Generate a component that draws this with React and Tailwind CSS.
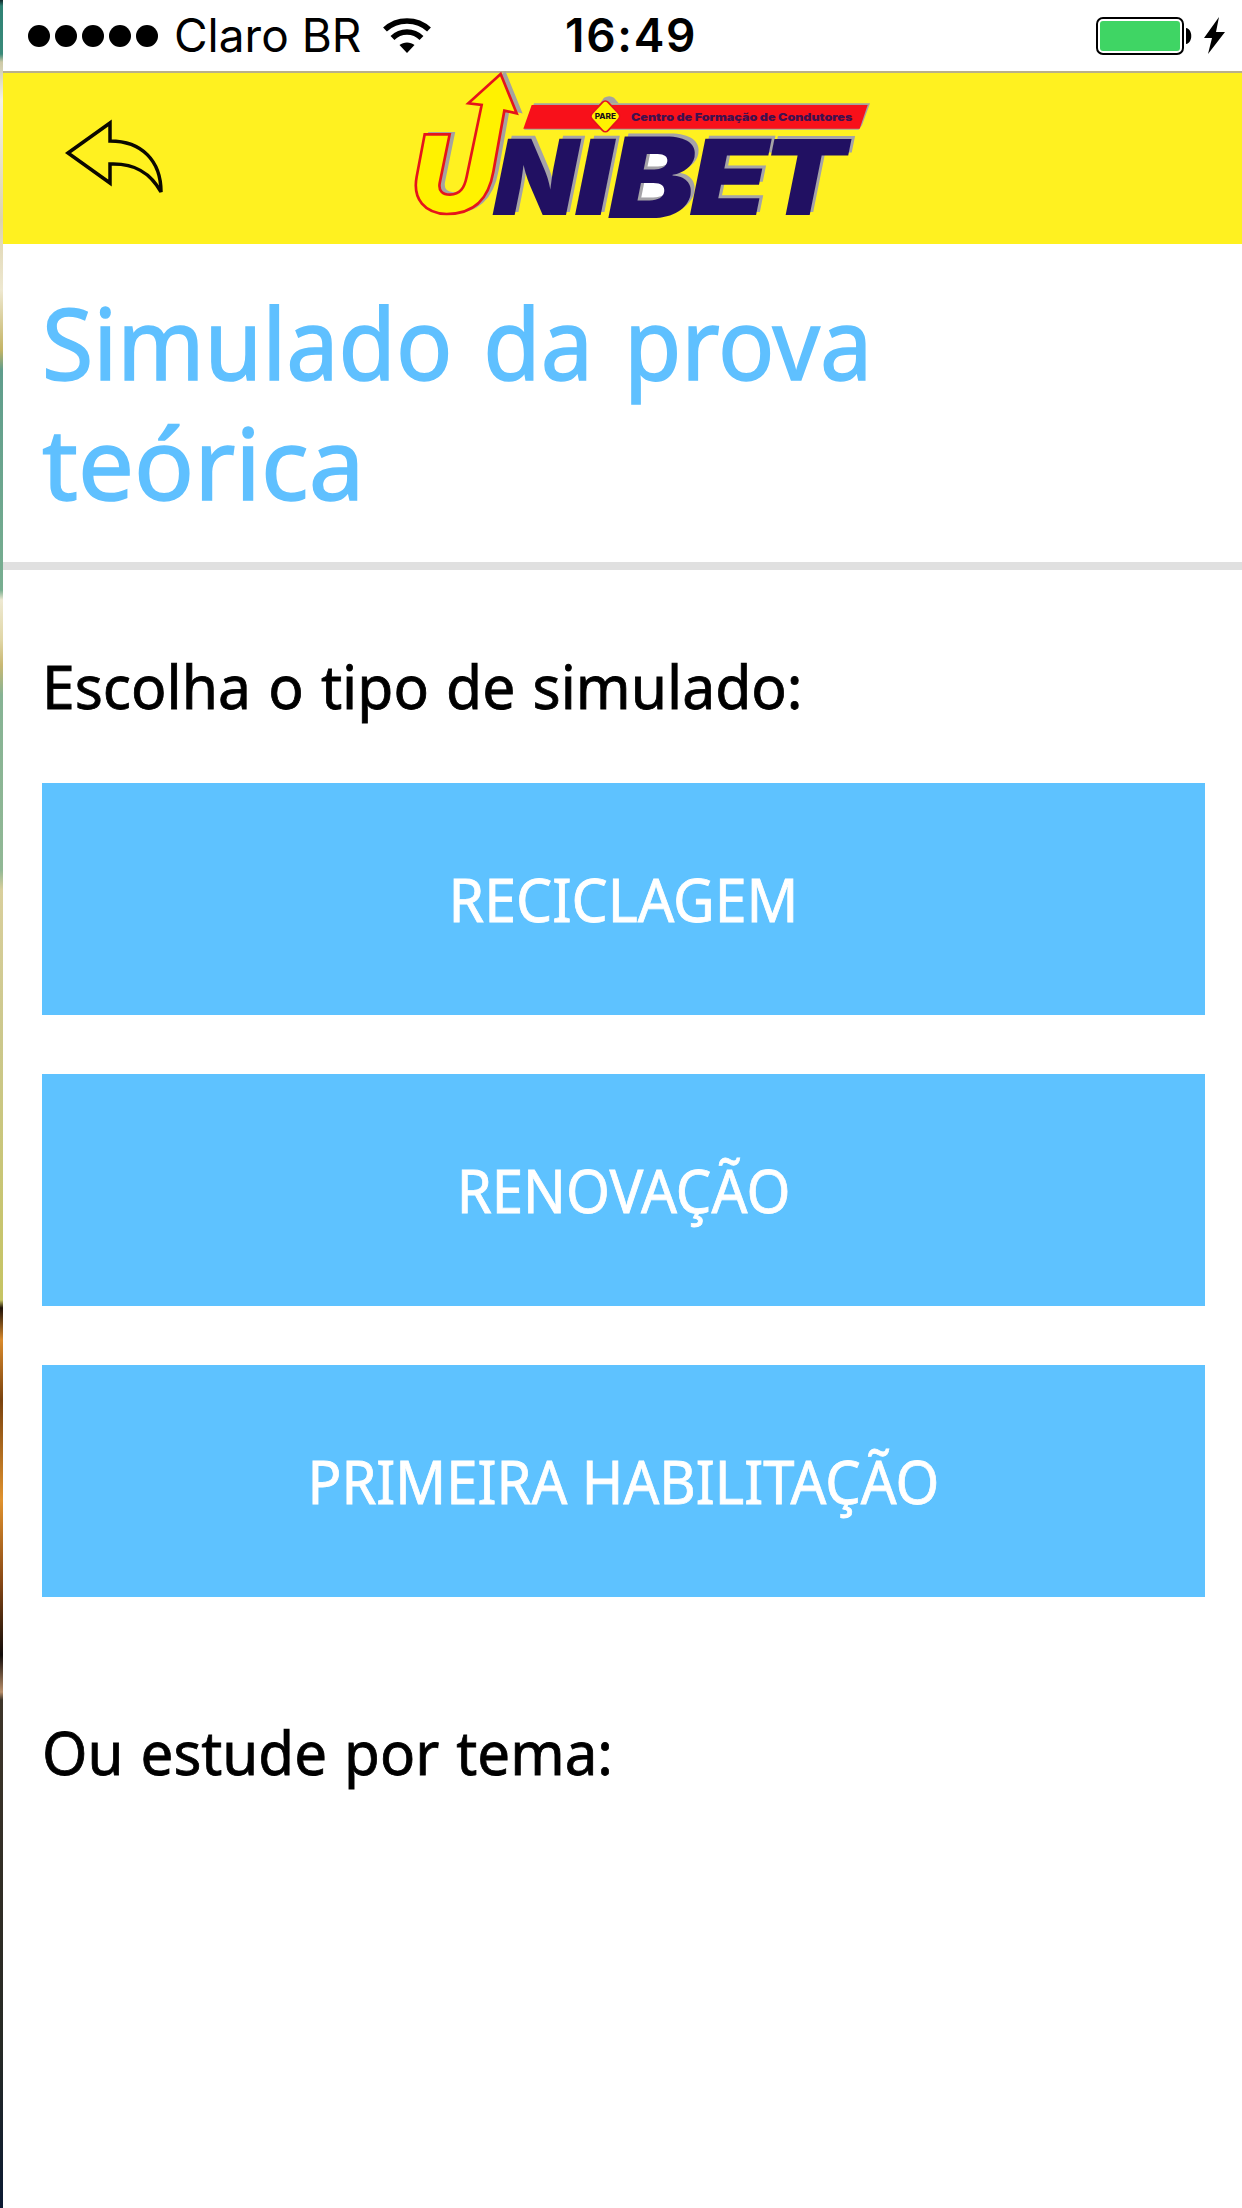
import React from 'react'

const exams = [
  { label: 'RECICLAGEM', stretch: 'scale-x-[0.938]' },
  { label: 'RENOVAÇÃO', stretch: 'scale-x-[0.924]' },
  { label: 'PRIMEIRA HABILITAÇÃO', stretch: 'scale-x-[0.92]' },
]

// x is the left edge on the baseline, sx stretches the glyph
const logoLetters = [
  { char: 'N', x: 262.5, y: 465, sx: 1.038, sy: 1 },
  { char: 'I', x: 507, y: 465, sx: 1.24, sy: 1 },
  { char: 'B', x: 607, y: 475, sx: 1.24, sy: 1.07 },
  { char: 'E', x: 852, y: 465, sx: 1.21, sy: 1 },
  { char: 'T', x: 1067, y: 465, sx: 1.167, sy: 1 },
]

const arrowPath =
  'M74 223 H149 L119 370 C115 393 128 404 150 404 C180 403 193 385 200 350 L245 135 L205 130 L302 42 L350 160 L313 152 L280 335 C266 415 225 462 140 462 C75 460 37 418 50 350 Z'

const Letter = ({ letter, fill }) => (
  <text
    transform={`translate(${letter.x} ${letter.y}) skewX(-11.4) scale(${letter.sx} ${letter.sy})`}
    fontFamily="Inter, sans-serif"
    fontWeight="900"
    fontSize="314"
    fill={fill}
  >
    {letter.char}
  </text>
)

const Logo = () => (
  <svg className="w-[480px] h-[172px] shrink-0 overflow-visible" viewBox="0 33 1440 516">
    {/* U arrow */}
    <path d={arrowPath} transform="translate(13 -4)" fill="#a5a3a0" stroke="#a5a3a0" strokeWidth="6" />
    <path d={arrowPath} fill="#fff200" stroke="#e5141b" strokeWidth="8" />

    {/* Red banner */}
    <path d="M376 202 L402 130 H1410 L1386 196 L1376 209 H372 Z" fill="#a5a3a0" />
    <path d="M370 206 L395 135 H1403 L1379 206 Z" fill="#f8101a" />
    <path d="M600 130 L612 113 Q628 104 642 113 L656 130 Z" fill="#a5a3a0" />
    <rect x="-33" y="-33" width="66" height="66" rx="12" transform="translate(616 169) scale(1.02 1.1) rotate(45)" fill="#fff200" stroke="#e5141b" strokeWidth="5" />
    <text x="584" y="177" textLength="64" lengthAdjust="spacingAndGlyphs" fontFamily="Inter, sans-serif" fontWeight="800" fontSize="22" fill="#1c1018">
      PARE
    </text>
    <text x="693" y="183" textLength="664" lengthAdjust="spacingAndGlyphs" fontFamily="Inter, sans-serif" fontWeight="900" fontSize="32" fill="#40104f">
      Centro de Formação de Condutores
    </text>

    {/* White showing through the B */}
    <path d="M740 275 H810 L795 425 H715 Z" fill="#fff" />
    {logoLetters.map((letter) => (
      <g key={letter.char}>
        <g transform="translate(11 -9)">
          <Letter letter={letter} fill="#a5a3a7" />
        </g>
        <Letter letter={letter} fill="#211062" />
      </g>
    ))}
  </svg>
)

const StatusBar = () => (
  <div className="flex items-center h-[71px] pl-[25px] pr-[17px] bg-white text-black">
    <div className="flex gap-[5px]">
      {[1, 2, 3, 4, 5].map((dot) => (
        <span key={dot} className="w-[22px] h-[22px] rounded-full bg-black" />
      ))}
    </div>
    <span className="ml-[16px] w-[190px] font-[Inter] text-[46px] leading-[71px] whitespace-nowrap">Claro BR</span>
    <svg className="ml-[19px] w-[48px] h-[36px]" viewBox="0 0 48 36" fill="none" stroke="#000" strokeWidth="5.5">
      <path d="M2 11.5 C14 0 34 0 46 11.5" />
      <path d="M9.5 20 C17.5 12 30.5 12 38.5 20" />
      <path d="M16.5 27 C20.5 23.5 27.5 23.5 31.5 27 L24 35 Z" fill="#000" stroke="none" />
    </svg>
    <span className="ml-[134px] font-[Inter] font-semibold text-[46px] tracking-[1.7px] leading-[71px] whitespace-nowrap">16:49</span>
    <svg className="ml-auto w-[129px] h-[40px]" viewBox="0 0 129 40">
      <rect x="1" y="2" width="86" height="36" rx="6" fill="#fff" stroke="#000" strokeWidth="2" />
      <rect x="4" y="5" width="80" height="30" rx="3" fill="#3fd564" />
      <path d="M90 12 C97 13 97 27 90 28 Z" fill="#000" />
      <path d="M123 1 L108 22 H116 L112 38 L129 16 H120 Z" fill="#000" />
    </svg>
  </div>
)

const Header = () => (
  <div className="flex h-[173px] bg-[#fff120] border-t-2 border-[#b9b08a]">
    <button className="ml-[61px] mt-[45px] w-[102px] h-[80px]">
      <svg className="w-[102px] h-[80px]" viewBox="0 0 102 80" fill="none" stroke="#0b0800" strokeWidth="3.5">
        <path d="M4 35 L46 5 V23 C78 23 97 43 97 74 C86 54 70 45 46 46 V65 Z" />
      </svg>
    </button>
    <div className="ml-[234px] -mt-[2px]">
      <Logo />
    </div>
  </div>
)

const App = () => {
  return (
    <div className="flex w-[1242px] h-[2208px] bg-white overflow-hidden">
      {/* Sliver of the background photo */}
      <div className="w-[3px] shrink-0 bg-[linear-gradient(to_bottom,#10262b_0px,#2f8274_6px,#3a8a7a_54px,#cdc9a6_62px,#f4f1e6_100px,#ddd3ad_220px,#eee8d0_290px,#c4b465_350px,#5f9d8c_370px,#78ae90_590px,#eee9d2_600px,#e0d6a6_640px,#c9b873_665px,#86b394_695px,#91b895_870px,#d9cf9c_890px,#ccc88c_1040px,#c6c463_1300px,#1f1208_1308px,#d98a2c_1340px,#7a430f_1400px,#e0922e_1500px,#8a4a16_1580px,#120c0a_1655px,#b88f6a_1692px,#3d352a_1700px,#302d25_1900px,#262a26_2050px,#0b1a33_2208px)]" />
      <div className="flex flex-col flex-1">
        <StatusBar />
        <Header />
        <h1 className="h-[318px] pt-[38px] pl-[39px] font-['Noto_Sans'] text-[98px] leading-[120px] text-[#5fc0ff] [-webkit-text-stroke:1.5px_#5fc0ff]">
          <span className="block origin-left scale-x-[0.952] [word-spacing:7px] whitespace-nowrap">Simulado da prova</span>
          <span className="block origin-left scale-x-[1.015]">teórica</span>
        </h1>
        <div className="h-[8px] bg-[#e0e0e0]" />
        <div className="flex flex-col pl-[39px] pr-[37px] font-['Noto_Sans'] text-[61px] text-black [-webkit-text-stroke:0.8px]">
          <p className="mt-[76px] leading-[80px] origin-left scale-x-[0.963] [word-spacing:2px] whitespace-nowrap">Escolha o tipo de simulado:</p>
          <div className="mt-[57px] flex flex-col gap-[59px]">
            {exams.map((exam) => (
              <button key={exam.label} className="flex items-center justify-center h-[232px] bg-[#5ec2ff] text-white">
                <span className={exam.stretch}>{exam.label}</span>
              </button>
            ))}
          </div>
          <p className="mt-[115px] leading-[80px] origin-left scale-x-[0.955] [word-spacing:2px] whitespace-nowrap">Ou estude por tema:</p>
        </div>
      </div>
    </div>
  )
}

export default App
